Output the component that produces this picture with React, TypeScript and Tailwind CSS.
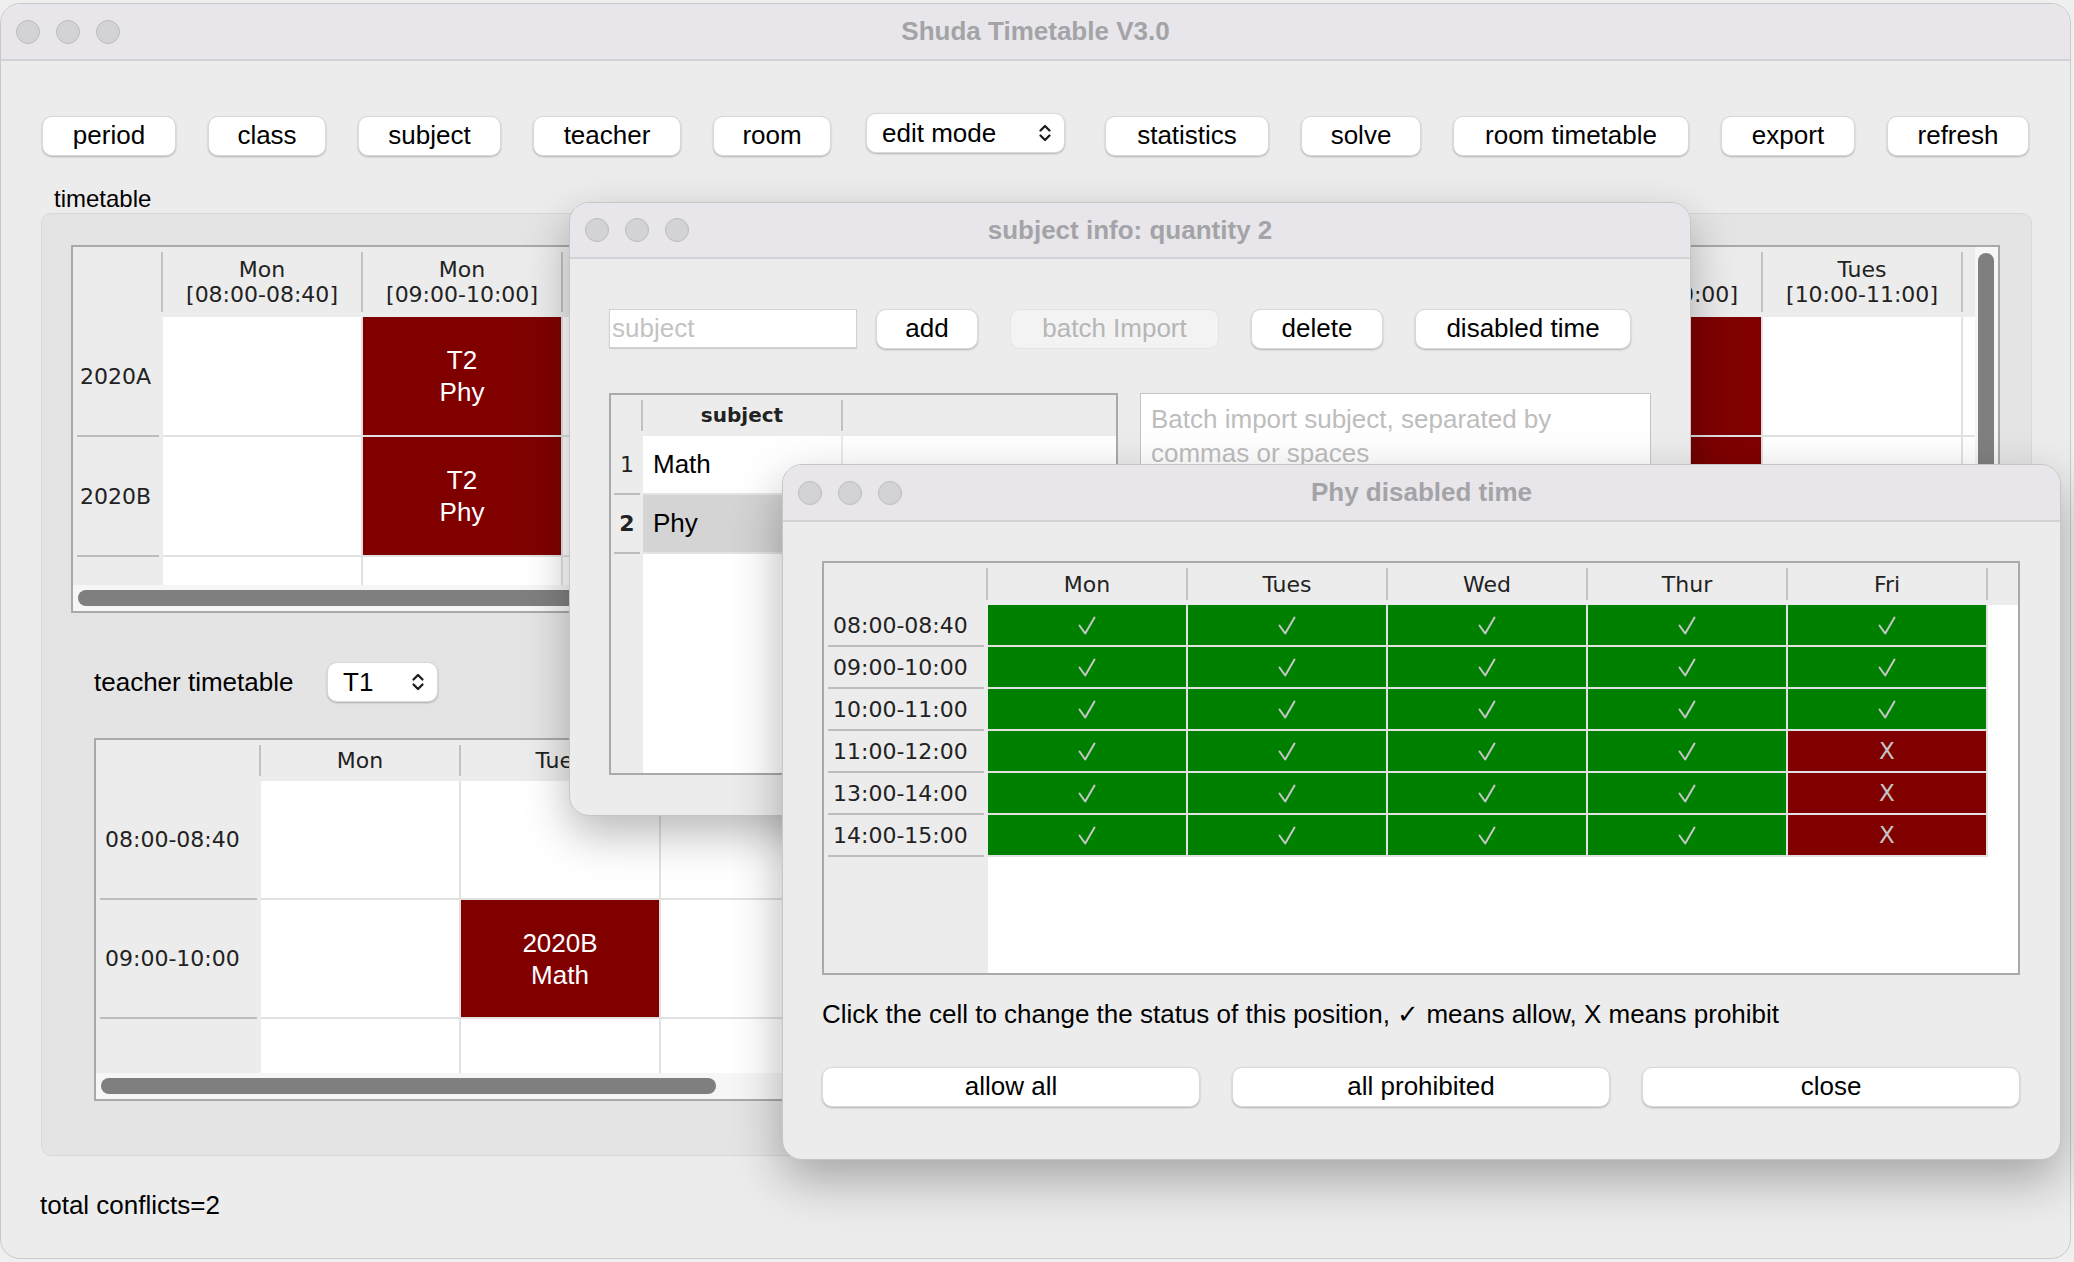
import React from "react";

const TB = "font-['DejaVu_Sans',sans-serif]";

const periods = ["08:00-08:40", "09:00-10:00", "10:00-11:00", "11:00-12:00", "13:00-14:00", "14:00-15:00"];
const days = ["Mon", "Tues", "Wed", "Thur", "Fri"];

type Cell = [string, string] | null;

const mainCols = [
  ...periods.map((p) => ["Mon", p]),
  ...periods.slice(0, 4).map((p) => ["Tues", p]),
];

const mainRows: { label: string; cells: Record<number, Cell> }[] = [
  { label: "2020A", cells: { 1: ["T2", "Phy"], 7: ["T3", "Math"] } },
  { label: "2020B", cells: { 1: ["T2", "Phy"], 7: ["T1", "Math"] } },
  { label: "", cells: {} },
];

const teacherRows: { label: string; cells: Record<number, Cell> }[] = [
  { label: "08:00-08:40", cells: {} },
  { label: "09:00-10:00", cells: { 1: ["2020B", "Math"] } },
  { label: "", cells: {} },
];

// Fri is prohibited from 11:00 on
const banned = (r: number, d: number) => d === 4 && r >= 3;

function Lights() {
  return (
    <div className="flex gap-[16px]">
      {[0, 1, 2].map((i) => (
        <span key={i} className="block w-[24px] h-[24px] rounded-full bg-[#d3d2d6] border border-[#bcbbbf]" />
      ))}
    </div>
  );
}

function TitleBar({ title, h }: { title: string; h: string }) {
  return (
    <div className={`${h} shrink-0 grid grid-cols-[1fr_auto_1fr] items-center bg-[#e8e6ea] border-b-2 border-[#d3d2d6]`}>
      <div className="pl-[15px]">
        <Lights />
      </div>
      <div className="text-[26px] font-bold text-[#a4a3a7]">{title}</div>
      <div />
    </div>
  );
}

function Btn({
  children,
  w,
  disabled = false,
}: {
  children: React.ReactNode;
  w: string;
  disabled?: boolean;
}) {
  return (
    <button
      className={`${w} h-[40px] shrink-0 rounded-[10px] border pb-[2px] text-[26px] leading-none ${
        disabled
          ? "bg-[#f3f3f3] text-[#b6b6b6] border-[#e3e3e3]"
          : "bg-white text-black border-[#d9d9d9] shadow-[0_1px_2px_rgba(0,0,0,0.25)]"
      }`}
    >
      {children}
    </button>
  );
}

function Chevrons() {
  return (
    <svg width="14" height="24" viewBox="0 0 14 24" fill="none" stroke="#1c1c1c" strokeWidth="2.3" strokeLinecap="round" strokeLinejoin="round">
      <path d="M2.5 9.5 7 5 11.5 9.5" />
      <path d="M2.5 14.5 7 19 11.5 14.5" />
    </svg>
  );
}

function Tick() {
  return (
    <svg width="18" height="19" viewBox="0 0 18 19" fill="none" stroke="#c6c6c6" strokeWidth="2" strokeLinecap="round" strokeLinejoin="round">
      <path d="M1.5 9.5 7.2 17.5 16.5 1.5" />
    </svg>
  );
}

function Select({ label, w }: { label: string; w: string }) {
  return (
    <div className={`${w} h-[40px] shrink-0 rounded-[10px] bg-white border border-[#d9d9d9] shadow-[0_1px_2px_rgba(0,0,0,0.25)] flex items-center justify-between pl-[15px] pr-[12px] text-[26px]`}>
      <span>{label}</span>
      <Chevrons />
    </div>
  );
}

function HeadCell({ w, children }: { w: string; children?: React.ReactNode }) {
  return (
    <div className={`${w} shrink-0 flex items-stretch`}>
      <div className={`flex-1 flex flex-col items-center justify-center text-[22px] leading-[25px] text-[#222] ${TB}`}>{children}</div>
      <div className="w-[2px] my-[5px] bg-[#c2c2c2]" />
    </div>
  );
}

function RowHead({ w, label, pl }: { w: string; label: string; pl: string }) {
  return (
    <div className={`${w} h-full shrink-0 flex flex-col bg-[#ececec]`}>
      <div className={`flex-1 flex items-center ${pl} text-[22px] text-[#222] ${TB}`}>{label}</div>
      <div className="h-[2px] mx-[4px] bg-[#bdbdbd]" />
    </div>
  );
}

function DataCell({ cell }: { cell?: Cell }) {
  return (
    <div
      className={`w-[200px] h-full shrink-0 border-r-2 border-b-2 border-[#e1e1e1] flex flex-col items-center justify-center text-[26px] leading-[32px] text-white ${
        cell ? "bg-[#800000]" : "bg-white"
      }`}
    >
      {cell && (
        <>
          <span>{cell[0]}</span>
          <span>{cell[1]}</span>
        </>
      )}
    </div>
  );
}

function VScroll({ thumb }: { thumb: string }) {
  return (
    <div className="w-[23px] shrink-0 bg-[#f6f6f6] pt-[6px] pl-[3px]">
      <div className={`w-[16px] ${thumb} rounded-full bg-[#7f7f7f]`} />
    </div>
  );
}

function HScroll({ thumb }: { thumb: string }) {
  return (
    <div className="h-[26px] shrink-0 bg-[#f6f6f6] flex items-center pl-[5px]">
      <div className={`h-[16px] ${thumb} rounded-full bg-[#7f7f7f]`} />
    </div>
  );
}

function ClassTable() {
  return (
    <div className="w-[1929px] h-[368px] shrink-0 border-2 border-[#a9a9a9] bg-[#ececec] flex flex-col overflow-hidden">
      <div className="flex-1 min-h-0 flex">
        <div className="flex-1 min-w-0 overflow-hidden">
          <div className="flex h-[70px]">
            <HeadCell w="w-[90px]" />
            {mainCols.map(([d, p], i) => (
              <HeadCell key={i} w="w-[200px]">
                <span>{d}</span>
                <span>[{p}]</span>
              </HeadCell>
            ))}
          </div>
          {mainRows.map((r, ri) => (
            <div key={ri} className="flex h-[120px]">
              <RowHead w="w-[90px]" label={r.label} pl="pl-[7px]" />
              {mainCols.map((_, ci) => (
                <DataCell key={ci} cell={r.cells[ci]} />
              ))}
            </div>
          ))}
        </div>
        <VScroll thumb="h-[290px]" />
      </div>
      <HScroll thumb="w-[640px]" />
    </div>
  );
}

function TeacherTable() {
  const cols = [...days, "Mon", "Tues", "Wed", "Thur"];
  return (
    <div className="w-[1885px] h-[363px] shrink-0 border-2 border-[#a9a9a9] bg-[#ececec] flex flex-col overflow-hidden">
      <div className="flex-1 min-h-0 flex">
        <div className="flex-1 min-w-0 overflow-hidden">
          <div className="flex h-[41px]">
            <HeadCell w="w-[165px]" />
            {cols.map((d, i) => (
              <HeadCell key={i} w="w-[200px]">
                <span>{d}</span>
              </HeadCell>
            ))}
          </div>
          {teacherRows.map((r, ri) => (
            <div key={ri} className="flex h-[119px]">
              <RowHead w="w-[165px]" label={r.label} pl="pl-[9px]" />
              {cols.map((_, ci) => (
                <DataCell key={ci} cell={r.cells[ci]} />
              ))}
            </div>
          ))}
        </div>
        <VScroll thumb="h-[150px]" />
      </div>
      <HScroll thumb="w-[615px]" />
    </div>
  );
}

function SubjectDialog() {
  return (
    <div className="absolute left-[569px] top-[202px] w-[1122px] h-[614px] rounded-[20px] overflow-hidden bg-[#ececec] border border-[#c6c6c6] shadow-[0_18px_45px_rgba(0,0,0,0.28)] flex flex-col">
      <TitleBar title="subject info: quantity 2" h="h-[56px]" />
      <div className="flex flex-col pt-[50px] px-[39px]">
        <div className="flex items-start">
          <input
            readOnly
            placeholder="subject"
            className="w-[248px] h-[39px] shrink-0 bg-white border border-[#d2d2d2] shadow-[0_1px_1px_rgba(0,0,0,0.12)] pl-[2px] text-[26px] outline-none placeholder:text-[#c3c3c3]"
          />
          <div className="flex items-start gap-[32px] ml-[19px]">
            <Btn w="w-[102px]">add</Btn>
            <Btn w="w-[209px]" disabled>
              batch Import
            </Btn>
            <Btn w="w-[132px]">delete</Btn>
            <Btn w="w-[216px]">disabled time</Btn>
          </div>
        </div>
        <div className="flex gap-[22px] mt-[44px]">
          <div className="w-[509px] h-[382px] border-2 border-[#a9a9a9] bg-white flex flex-col overflow-hidden">
            <div className="h-[41px] shrink-0 flex bg-[#ececec]">
              <HeadCell w="w-[32px]" />
              <HeadCell w="w-[200px]">
                <span className="font-bold text-[20px]">subject</span>
              </HeadCell>
            </div>
            {[
              { n: "1", t: "Math", sel: false },
              { n: "2", t: "Phy", sel: true },
            ].map((r) => (
              <div key={r.n} className="h-[59px] shrink-0 flex">
                <div className="w-[32px] shrink-0 flex flex-col bg-[#ececec]">
                  <div className={`flex-1 flex items-center justify-center text-[22px] text-[#222] ${TB} ${r.sel ? "font-bold" : ""}`}>{r.n}</div>
                  <div className="h-[2px] mx-[3px] bg-[#bdbdbd]" />
                </div>
                <div className={`flex-1 flex border-b-2 border-[#e4e4e4] ${r.sel ? "bg-[#d4d4d4]" : "bg-white"}`}>
                  <div className="w-[200px] shrink-0 flex items-center pl-[10px] text-[26px] border-r-2 border-[#e8e8e8]">{r.t}</div>
                </div>
              </div>
            ))}
            <div className="flex-1 flex">
              <div className="w-[32px] shrink-0 bg-[#ececec]" />
              <div className="flex-1 bg-white" />
            </div>
          </div>
          <div className="w-[511px] h-[382px] bg-white border border-[#c4c4c4] pt-[8px] px-[10px] text-[26px] leading-[34px] text-[#bdbdbd]">
            <div>Batch import subject, separated by</div>
            <div>commas or spaces</div>
          </div>
        </div>
      </div>
    </div>
  );
}

function DisabledTimeDialog() {
  return (
    <div className="absolute left-[782px] top-[464px] w-[1279px] h-[696px] rounded-[20px] overflow-hidden bg-[#ececec] border border-[#c6c6c6] shadow-[0_20px_50px_rgba(0,0,0,0.3)] flex flex-col">
      <TitleBar title="Phy disabled time" h="h-[57px]" />
      <div className="flex flex-col pt-[39px] px-[39px]">
        <div className="w-[1198px] h-[414px] border-2 border-[#a9a9a9] bg-white flex flex-col overflow-hidden">
          <div className="h-[42px] shrink-0 flex bg-[#ececec]">
            <HeadCell w="w-[164px]" />
            {days.map((d) => (
              <HeadCell key={d} w="w-[200px]">
                <span>{d}</span>
              </HeadCell>
            ))}
          </div>
          {periods.map((p, ri) => (
            <div key={p} className="h-[42px] shrink-0 flex">
              <RowHead w="w-[164px]" label={p} pl="pl-[9px]" />
              {days.map((d, di) => (
                <div
                  key={d}
                  className={`w-[200px] h-full shrink-0 border-r-2 border-b-2 border-[#e1e1e1] flex items-center justify-center text-[23px] text-[#c6c6c6] ${TB} ${
                    banned(ri, di) ? "bg-[#800000]" : "bg-[#008000]"
                  }`}
                >
                  {banned(ri, di) ? "X" : <Tick />}
                </div>
              ))}
            </div>
          ))}
          <div className="flex-1 flex">
            <div className="w-[164px] shrink-0 bg-[#ececec]" />
            <div className="flex-1 bg-white" />
          </div>
        </div>
        <p className="mt-[23px] h-[32px] text-[26px] leading-[32px]">
          Click the cell to change the status of this position, ✓ means allow, X means prohibit
        </p>
        <div className="grid grid-cols-3 gap-[32px] mt-[37px] w-[1198px]">
          <Btn w="w-full">allow all</Btn>
          <Btn w="w-full">all prohibited</Btn>
          <Btn w="w-full">close</Btn>
        </div>
      </div>
    </div>
  );
}

export default function App() {
  return (
    <div className="relative w-[2074px] h-[1262px] overflow-hidden bg-[#efefef] font-['Liberation_Sans',sans-serif] text-black">
      <div className="mt-[3px] w-[2071px] h-[1256px] rounded-[20px] overflow-hidden bg-[#ececec] border border-[#c9c9c9] flex flex-col">
        <TitleBar title="Shuda Timetable V3.0" h="h-[57px]" />

        <div className="flex items-start pt-[52px] pl-[41px] gap-[32px]">
          {[
            ["period", "w-[134px]"],
            ["class", "w-[118px]"],
            ["subject", "w-[143px]"],
            ["teacher", "w-[148px]"],
            ["room", "w-[118px]"],
          ].map(([t, w]) => (
            <div key={t} className="pt-[3px]">
              <Btn w={w}>{t}</Btn>
            </div>
          ))}
          <div className="ml-[3px] mr-[8px]">
            <Select label="edit mode" w="w-[199px]" />
          </div>
          {[
            ["statistics", "w-[164px]"],
            ["solve", "w-[120px]"],
            ["room timetable", "w-[236px]"],
            ["export", "w-[134px]"],
            ["refresh", "w-[142px]"],
          ].map(([t, w]) => (
            <div key={t} className="pt-[3px]">
              <Btn w={w}>{t}</Btn>
            </div>
          ))}
        </div>

        <div className="mt-[29px] ml-[53px] h-[28px] text-[24px] leading-[28px]">timetable</div>

        <div className="ml-[40px] w-[1991px] h-[943px] shrink-0 rounded-[10px] bg-[#e4e4e4] border border-[#d8d8d8] pt-[31px] pl-[29px] flex flex-col">
          <ClassTable />
          <div className="ml-[23px] mt-[49px] flex items-center gap-[24px]">
            <span className="w-[209px] text-[26px]">teacher timetable</span>
            <Select label="T1" w="w-[111px]" />
          </div>
          <div className="ml-[23px] mt-[36px]">
            <TeacherTable />
          </div>
        </div>

        <div className="mt-[34px] ml-[39px] h-[30px] text-[26px] leading-[30px]">total conflicts=2</div>
      </div>

      <SubjectDialog />
      <DisabledTimeDialog />
    </div>
  );
}
